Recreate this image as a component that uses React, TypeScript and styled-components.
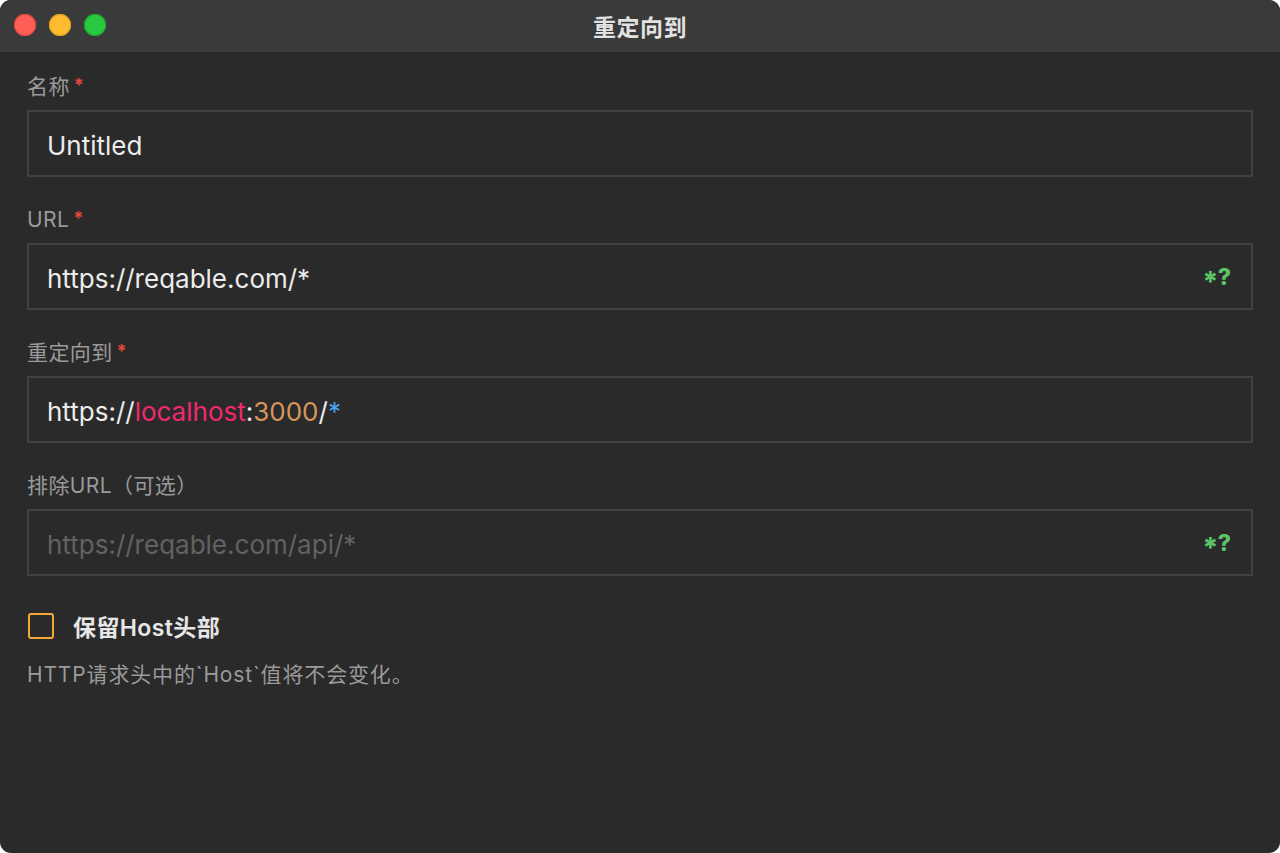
import React from "react";
import styled, { createGlobalStyle } from "styled-components";

const Global = createGlobalStyle`
  html, body { margin: 0; padding: 0; background: #ffffff; }
  * { box-sizing: border-box; }
`;

const FONT = `Inter, "Noto Sans CJK SC", "Noto Sans", sans-serif`;

const Window = styled.div`
  width: 1280px;
  height: 853px;
  border-radius: 11px;
  overflow: hidden;
  background: #2a2a2a;
  display: flex;
  flex-direction: column;
  font-family: ${FONT};
`;

const TitleBar = styled.div`
  position: relative;
  height: 53px;
  flex: none;
  background: #3a3a3a;
  border-bottom: 1px solid #262626;
  display: flex;
  align-items: center;
  justify-content: center;
`;

const Lights = styled.div`
  position: absolute;
  left: 14px;
  top: 14px;
  display: flex;
  gap: 13px;
`;

const Light = styled.span<{ $c: string; $b: string }>`
  width: 22px;
  height: 22px;
  border-radius: 50%;
  background: ${(p) => p.$c};
  box-shadow: inset 0 0 0 1px ${(p) => p.$b};
`;

const Title = styled.div`
  font-size: 23px;
  font-weight: 700;
  color: #e2e2e2;
  letter-spacing: 0.5px;
  margin-top: -1px;
`;

const Body = styled.div`
  flex: 1;
  padding: 22px 27px 0 27px;
  display: flex;
  flex-direction: column;
`;

const Field = styled.div`
  display: flex;
  flex-direction: column;
  margin-bottom: 31px;
`;

const Label = styled.div`
  height: 24px;
  line-height: 24px;
  font-size: 21px;
  letter-spacing: 0.4px;
  color: #9a9a9a;
  margin-bottom: 11px;
  display: flex;
  align-items: center;
`;

const Req = styled.span`
  color: #e5453c;
  font-weight: 700;
  font-size: 18px;
  margin-left: 4px;
  position: relative;
  top: -2px;
`;

const InputBox = styled.div`
  height: 67px;
  border: 2px solid #414141;
  background: #2a2a2a;
  display: flex;
  align-items: center;
  padding: 3px 20px 0 18px;
`;

const Value = styled.div<{ $placeholder?: boolean }>`
  flex: 1;
  font-size: 26px;
  color: ${(p) => (p.$placeholder ? "#626262" : "#ececec")};
  white-space: nowrap;
`;

const Seg = styled.span<{ $c: string }>`
  color: ${(p) => p.$c};
`;

const Regex = styled.span`
  color: #5bc466;
  font-weight: 800;
  font-size: 23px;
  display: flex;
  align-items: center;
  margin-top: -3px;
`;

const RegexStar = styled.span`
  font-size: 28px;
  margin-right: -1px;
  line-height: 1;
  transform: translateY(5px);
  display: inline-block;
`;

const CheckRow = styled.div`
  display: flex;
  align-items: center;
  gap: 19px;
  margin-top: 4px;
  height: 30px;
`;

const Box = styled.span`
  width: 26px;
  height: 26px;
  border: 2.5px solid #f3a833;
  border-radius: 3px;
  margin-left: 1px;
`;

const CheckLabel = styled.span`
  font-size: 23px;
  font-weight: 600;
  letter-spacing: 0.4px;
  color: #e6e6e6;
`;

const Help = styled.div`
  margin-top: 17px;
  font-size: 21px;
  letter-spacing: 0.85px;
  color: #9a9a9a;
`;

function RegexMark() {
  return (
    <Regex>
      <RegexStar>*</RegexStar>?
    </Regex>
  );
}

export default function App() {
  return (
    <>
      <Global />
      <Window>
        <TitleBar>
          <Lights>
            <Light $c="#fe5f57" $b="#e2463f" />
            <Light $c="#febc2e" $b="#dea123" />
            <Light $c="#28c840" $b="#1aab29" />
          </Lights>
          <Title>重定向到</Title>
        </TitleBar>
        <Body>
          <Field>
            <Label>
              名称<Req>*</Req>
            </Label>
            <InputBox>
              <Value>Untitled</Value>
            </InputBox>
          </Field>
          <Field>
            <Label>
              URL<Req>*</Req>
            </Label>
            <InputBox>
              <Value>https://reqable.com/*</Value>
              <RegexMark />
            </InputBox>
          </Field>
          <Field>
            <Label>
              重定向到<Req>*</Req>
            </Label>
            <InputBox>
              <Value>
                https://<Seg $c="#f0296c">localhost</Seg>:
                <Seg $c="#d6965c">3000</Seg>/<Seg $c="#4aa3f2">*</Seg>
              </Value>
            </InputBox>
          </Field>
          <Field>
            <Label>排除URL（可选）</Label>
            <InputBox>
              <Value $placeholder>https://reqable.com/api/*</Value>
              <RegexMark />
            </InputBox>
          </Field>
          <CheckRow>
            <Box />
            <CheckLabel>保留Host头部</CheckLabel>
          </CheckRow>
          <Help>HTTP请求头中的`Host`值将不会变化。</Help>
        </Body>
      </Window>
    </>
  );
}
